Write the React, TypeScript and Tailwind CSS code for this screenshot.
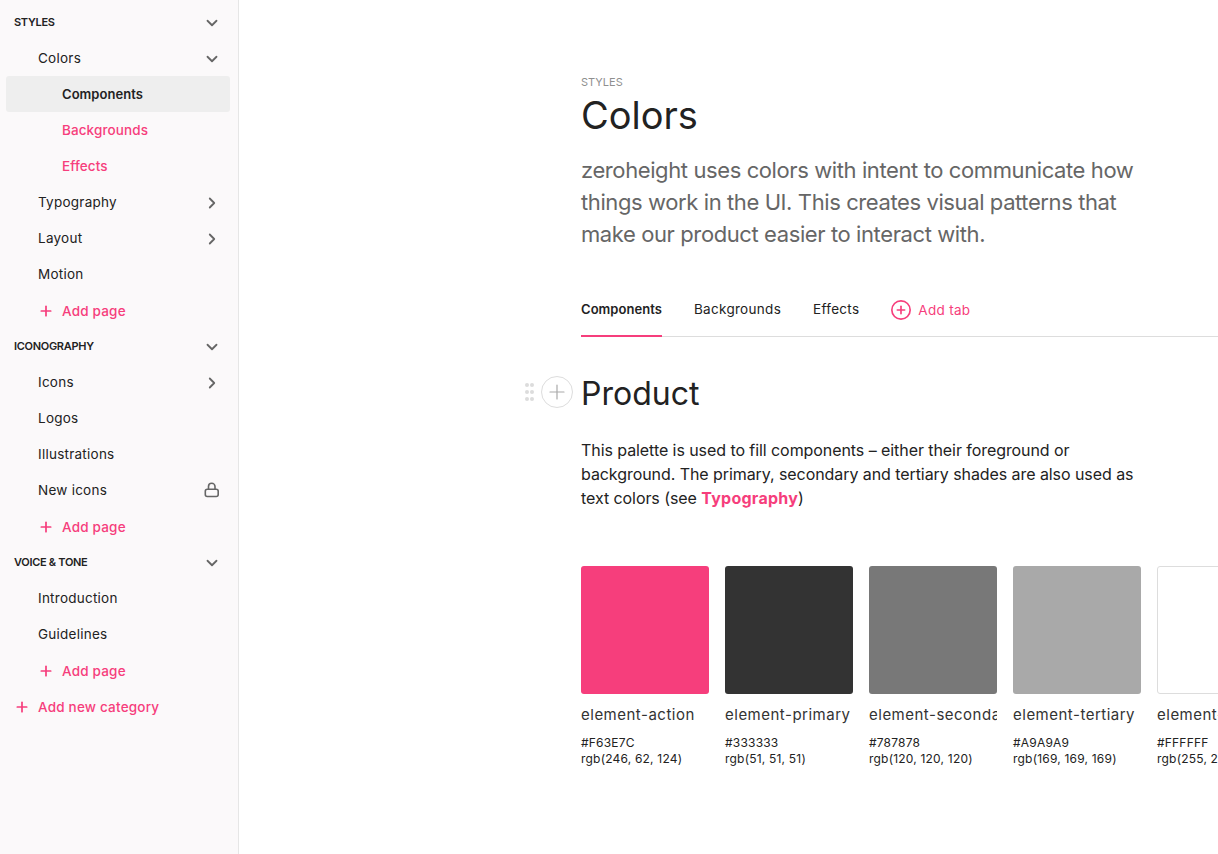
import { ChevronDown, ChevronRight, Plus, CirclePlus } from "lucide-react";

type NavItem = {
  label: string;
  kind?: "head" | "page" | "sub" | "active" | "add" | "addCat";
  icon?: "down" | "right" | "lock";
};

const nav: NavItem[] = [
  { label: "STYLES", kind: "head", icon: "down" },
  { label: "Colors", icon: "down" },
  { label: "Components", kind: "active" },
  { label: "Backgrounds", kind: "sub" },
  { label: "Effects", kind: "sub" },
  { label: "Typography", icon: "right" },
  { label: "Layout", icon: "right" },
  { label: "Motion" },
  { label: "Add page", kind: "add" },
  { label: "ICONOGRAPHY", kind: "head", icon: "down" },
  { label: "Icons", icon: "right" },
  { label: "Logos" },
  { label: "Illustrations" },
  { label: "New icons", icon: "lock" },
  { label: "Add page", kind: "add" },
  { label: "VOICE & TONE", kind: "head", icon: "down" },
  { label: "Introduction" },
  { label: "Guidelines" },
  { label: "Add page", kind: "add" },
  { label: "Add new category", kind: "addCat" },
];

const swatches = [
  { name: "element-action", hex: "#F63E7C", rgb: "rgb(246, 62, 124)", cls: "bg-[#f63e7c]" },
  { name: "element-primary", hex: "#333333", rgb: "rgb(51, 51, 51)", cls: "bg-[#333333]" },
  { name: "element-secondary", hex: "#787878", rgb: "rgb(120, 120, 120)", cls: "bg-[#787878]" },
  { name: "element-tertiary", hex: "#A9A9A9", rgb: "rgb(169, 169, 169)", cls: "bg-[#a9a9a9]" },
  { name: "element-inverse", hex: "#FFFFFF", rgb: "rgb(255, 255, 255)", cls: "bg-white border border-[#dddddd]" },
];

function NavIcon({ icon }: { icon?: NavItem["icon"] }) {
  if (icon === "down") return <ChevronDown size={18} strokeWidth={2.4} className="text-[#666666]" />;
  if (icon === "right") return <ChevronRight size={18} strokeWidth={2.4} className="text-[#666666]" />;
  if (icon === "lock")
    return (
      <svg width="18" height="18" viewBox="0 0 18 18" fill="none" stroke="#666666" strokeWidth="1.6" className="-mt-[1px]">
        <rect x="2.3" y="8.3" width="12.9" height="7.2" rx="2" />
        <path d="M5.5 8V5.5a3.25 3.25 0 0 1 6.5 0V8" />
      </svg>
    );
  return null;
}

function AddIcon() {
  return <Plus size={16} strokeWidth={2.6} />;
}

function NavRow({ item }: { item: NavItem }) {
  if (item.kind === "head") {
    return (
      <div className="h-9 flex items-center justify-between pt-[1px] pl-[14px] pr-[17px]">
        <span className="text-[11px] font-semibold tracking-[-0.3px] text-[#222222]">{item.label}</span>
        <NavIcon icon={item.icon} />
      </div>
    );
  }
  if (item.kind === "add") {
    return (
      <div className="h-9 flex items-center gap-[8px] pl-[38px] pt-[2px] text-[#f63e7c] text-[13.5px] tracking-[0.2px] font-medium">
        <AddIcon />
        {item.label}
      </div>
    );
  }
  if (item.kind === "addCat") {
    return (
      <div className="h-9 flex items-center gap-[8px] pl-[14px] pt-[2px] text-[#f63e7c] text-[13.5px] tracking-[0.2px] font-medium">
        <AddIcon />
        {item.label}
      </div>
    );
  }
  if (item.kind === "active") {
    return (
      <div className="h-9 ml-[6px] mr-[8px] rounded-[3px] bg-[#eeeeee] flex items-center pt-[2px] pl-[56px] text-[13px] tracking-[0.05px] font-semibold text-[#222222]">
        {item.label}
      </div>
    );
  }
  if (item.kind === "sub") {
    return (
      <div className="h-9 flex items-center pl-[62px] text-[13.5px] tracking-[0.1px] font-medium text-[#f63e7c]">
        {item.label}
      </div>
    );
  }
  return (
    <div className="h-9 flex items-center justify-between pt-[1px] pl-[38px] pr-[17px] text-[13.5px] tracking-[0.25px] text-[#222222]">
      <span>{item.label}</span>
      <NavIcon icon={item.icon} />
    </div>
  );
}

export default function App() {
  return (
    <div className="h-[854px] w-[1218px] flex overflow-hidden bg-white font-['Inter',sans-serif] text-[#222222]">
      <aside className="w-[239px] shrink-0 pt-[4px] bg-[#fbf9fa] border-r border-[#e6e6e6]">
        {nav.map((item, i) => (
          <NavRow key={i} item={item} />
        ))}
      </aside>

      <main className="flex-1 min-w-0 pl-[342px] pt-[75px]">
        <div className="text-[11px] leading-[14px] text-[#8f8f8f]">STYLES</div>
        <h1 className="text-[38px] leading-[46px] mt-[3px] font-normal text-[#222222]">Colors</h1>
        <p className="mt-[16px] w-[570px] text-[22px] leading-[32px] tracking-[-0.4px] text-[#666666]">
          zeroheight uses colors with intent to communicate how things work in the UI. This creates visual patterns
          that make our product easier to interact with.
        </p>

        <div className="mt-[32px] h-[55px] flex items-stretch gap-8 border-b border-[#dddddd] text-[13.5px] tracking-[0.3px]">
          <div className="flex items-center pt-[2px] text-[13px] tracking-[0.05px] font-semibold border-b-2 border-[#f63e7c] -mb-px">
            Components
          </div>
          <div className="flex items-center">Backgrounds</div>
          <div className="flex items-center">Effects</div>
          <div className="flex items-center pt-[2px] gap-[6px] text-[#f63e7c]">
            <CirclePlus size={22} strokeWidth={1.8} className="-ml-[1px]" />
            Add tab
          </div>
        </div>

        <div className="relative mt-[39px]">
          <div className="absolute -left-[56px] top-[7px] grid grid-cols-2 gap-x-[1px] gap-y-[3px]">
            {[0, 1, 2, 3, 4, 5].map((d) => (
              <span key={d} className="w-[4px] h-[4px] rounded-full bg-[#dcdcdc]" />
            ))}
          </div>
          <div className="absolute -left-[40px] top-0 w-8 h-8 rounded-full border border-[#dddddd] flex items-center justify-center text-[#a9a9a9]">
            <Plus size={24} strokeWidth={1.2} />
          </div>
          <h2 className="text-[32px] leading-[36px] font-normal text-[#222222]">Product</h2>
        </div>

        <p className="mt-[26px] w-[570px] text-[16px] leading-[24px] tracking-[-0.07px] text-[#222222]">
          This palette is used to fill components – either their foreground or background. The primary, secondary and
          tertiary shades are also used as text colors (see{" "}
          <span className="font-bold tracking-[0.25px] text-[#f63e7c]">Typography</span>)
        </p>

        <div className="mt-[56px] flex gap-4">
          {swatches.map((s) => (
            <div key={s.hex} className="w-[128px] shrink-0">
              <div className={`h-[128px] rounded-[3px] ${s.cls}`} />
              <div className="mt-[11px] overflow-hidden whitespace-nowrap text-[15px] tracking-[0.5px] leading-[20px] text-[#333333]">
                {s.name}
              </div>
              <div className="mt-[10px] whitespace-nowrap text-[12px] tracking-[0.2px] leading-[16px] text-[#222222]">
                <div>{s.hex}</div>
                <div>{s.rgb}</div>
              </div>
            </div>
          ))}
        </div>
      </main>
    </div>
  );
}
